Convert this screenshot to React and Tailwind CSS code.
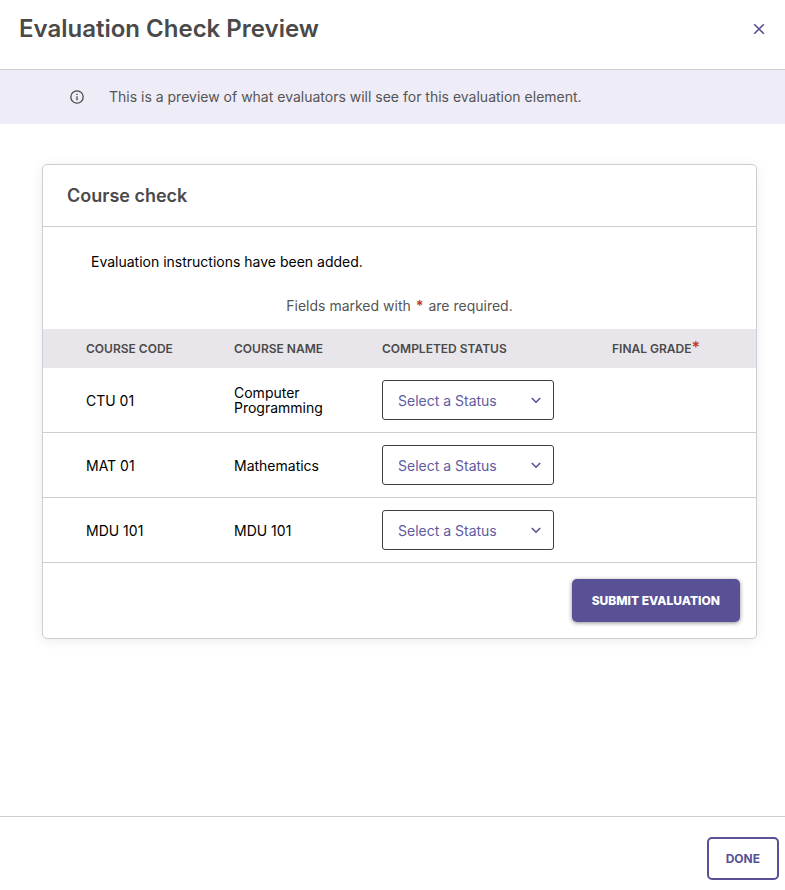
import React, { useState } from 'react';

const courses = [
  { id: 1, code: 'CTU 01', name: 'Computer Programming' },
  { id: 2, code: 'MAT 01', name: 'Mathematics' },
  { id: 3, code: 'MDU 101', name: 'MDU 101' },
];

function StatusSelect({ course, value, onChange }) {
  return (
    <div className="relative w-[172px]">
      <select
        id={`status-${course.id}`}
        aria-labelledby={`status-heading course-${course.id}`}
        value={value}
        onChange={(e) => onChange(course.id, e.target.value)}
        className="block w-full h-10 pl-[15px] pr-8 pt-px appearance-none rounded-[3px] border border-[#3f3f3f] bg-white text-sm text-[#625b9f]"
      >
        <option value="">Select a Status</option>
        <option value="completed">Completed</option>
        <option value="in-progress">In Progress</option>
        <option value="planned">Planned</option>
      </select>
      <svg
        className="absolute right-3 top-[14px] w-3 h-3 pointer-events-none text-[#585195]"
        viewBox="0 0 12 12"
        fill="none"
        stroke="currentColor"
        strokeWidth="1.6"
        aria-hidden="true"
      >
        <path d="M1.8 4 6 8.2 10.2 4" />
      </svg>
    </div>
  );
}

export default function App() {
  const [statuses, setStatuses] = useState({});

  const handleStatusChange = (id, status) => {
    setStatuses({ ...statuses, [id]: status });
  };

  const handleSubmit = (e) => {
    e.preventDefault();
  };

  return (
    <div className="flex flex-col min-h-screen bg-white font-['Inter',sans-serif] text-sm text-[#4a4a4a]">
      <header className="flex items-center justify-between h-[70px] pl-[19px] pr-5 pb-3 border-b border-[#cdcdd2]">
        <h1 className="text-2xl font-semibold">Evaluation Check Preview</h1>
        <button type="button" aria-label="Close" className="text-[#585195]">
          <svg className="w-3 h-3" viewBox="0 0 12 12" fill="none" stroke="currentColor" strokeWidth="1.6" aria-hidden="true">
            <path d="M1.2 1.2 10.8 10.8M10.8 1.2 1.2 10.8" />
          </svg>
        </button>
      </header>

      <div className="flex items-center gap-[25px] h-[54px] px-[70px] bg-[#eeecf6]">
        <svg className="w-[14px] h-[14px] shrink-0" viewBox="0 0 14 14" fill="none" stroke="currentColor" strokeWidth="1.3" aria-hidden="true">
          <circle cx="7" cy="7" r="6.2" />
          <path d="M7 6.2V10.2M7 3.8V5.1" />
        </svg>
        <p className="text-[#555555]">This is a preview of what evaluators will see for this evaluation element.</p>
      </div>

      <main className="pt-10 pl-[42px] pr-7 pb-10">
        <form
          onSubmit={handleSubmit}
          className="rounded-[5px] border border-[#cdcdd2] bg-white shadow-[0_2px_12px_rgba(0,0,0,0.08)]"
        >
          <h2 className="px-6 pt-[17px] pb-4 border-b border-[#cdcdd2] text-lg font-semibold">Course check</h2>
          <p className="px-12 pt-[25px] text-black">Evaluation instructions have been added.</p>
          <p className="pt-6 pb-[13px] text-center text-[#555555]">
            Fields marked with <span className="px-px font-bold text-[#cc3b1c]">*</span> are required.
          </p>

          <table className="w-full table-fixed border-separate border-spacing-0 text-left">
            <thead>
              <tr className="h-[39px] bg-[#e9e6eb] text-xs">
                <th scope="col" className="w-[191px] pl-[43px] font-semibold">COURSE CODE</th>
                <th scope="col" className="w-[148px] font-semibold">COURSE NAME</th>
                <th scope="col" id="status-heading" className="w-[230px] font-semibold">COMPLETED STATUS</th>
                <th scope="col" className="font-semibold">
                  FINAL GRADE<span className="text-base leading-3 text-[#cc3b1c]">*</span>
                </th>
              </tr>
            </thead>
            <tbody className="leading-[15px] text-black">
              {courses.map((course) => (
                <tr key={course.id} className="h-[65px] *:border-b *:border-[#cdcdd2]">
                  <td id={`course-${course.id}`} className="pl-[43px]">{course.code}</td>
                  <td className="pr-10">{course.name}</td>
                  <td>
                    <StatusSelect
                      course={course}
                      value={statuses[course.id] || ''}
                      onChange={handleStatusChange}
                    />
                  </td>
                  <td></td>
                </tr>
              ))}
            </tbody>
          </table>

          <div className="flex justify-end p-4">
            <button
              type="submit"
              className="h-[43px] px-5 rounded-[5px] bg-[#585195] text-xs font-extrabold text-white shadow-[0_1px_4px_rgba(0,0,0,0.45)]"
            >
              SUBMIT EVALUATION
            </button>
          </div>
        </form>
      </main>

      <footer className="flex justify-end mt-auto pt-5 pr-[6px] pb-[10px] border-t border-[#cdcdd2]">
        <button
          type="button"
          className="h-[43px] px-[17px] rounded-[5px] border-2 border-[#585195] bg-white text-xs font-bold text-[#585195]"
        >
          DONE
        </button>
      </footer>
    </div>
  );
}
